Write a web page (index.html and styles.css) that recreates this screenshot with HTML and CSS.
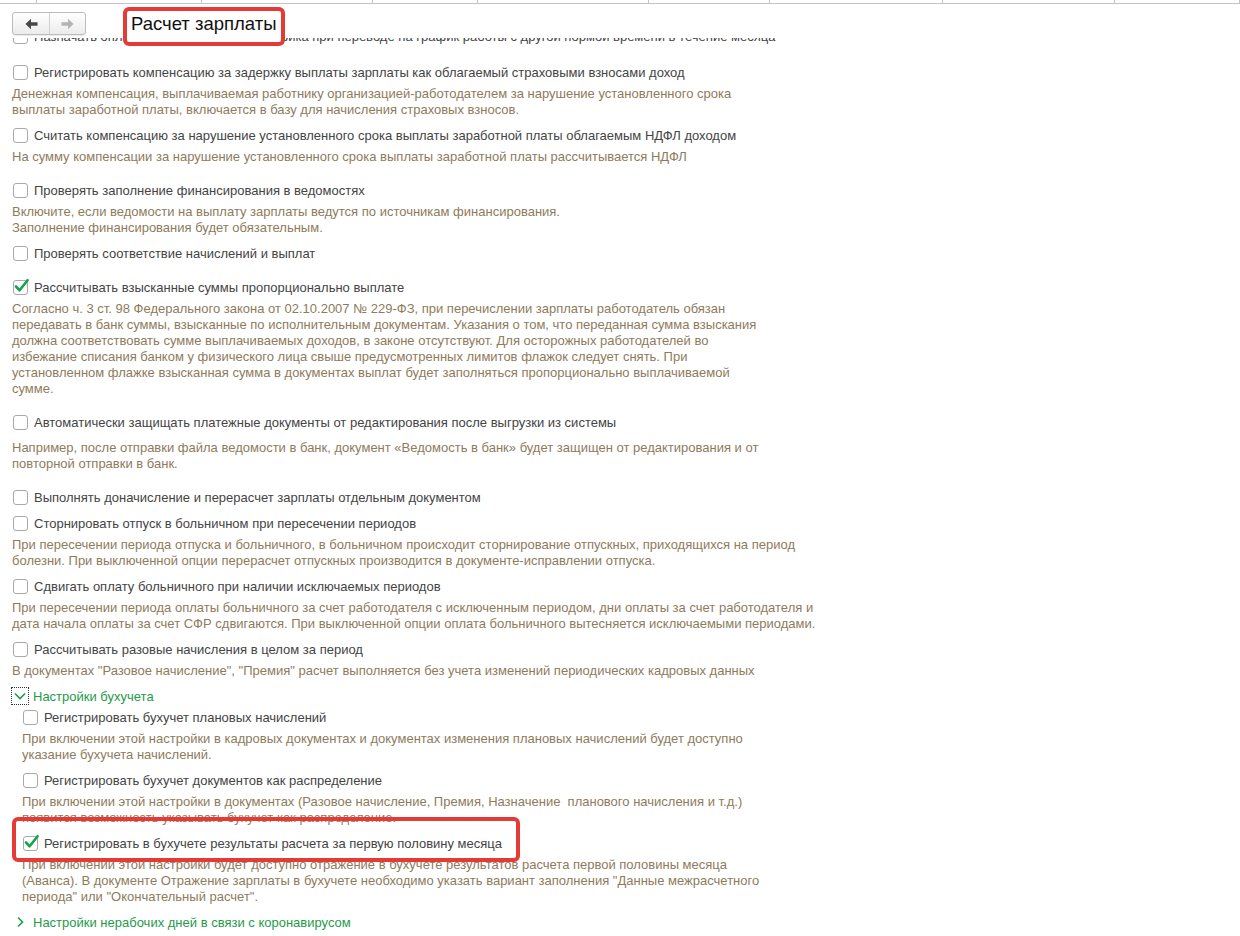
FILE: index.html
```html
<!DOCTYPE html>
<html lang="ru">
    <head>
        <meta charset="utf-8" />
        <title>Расчет зарплаты</title>
        <link rel="stylesheet" href="styles.css">
    </head>

    <body>
        <div class="topgrid">
            <span></span><span></span><span></span><span></span><span></span><span></span><span></span><span></span><span></span>
        </div>

        <div class="toolbar">
            <div class="nav">
                <button class="nav-btn">
                    <svg width="13" height="12" viewBox="0 0 13 12"><path d="M0.5 6 L6 0.8 L6 4.2 L12.5 4.2 L12.5 7.8 L6 7.8 L6 11.2 Z" fill="#474747"/></svg>
                </button>
                <button class="nav-btn off">
                    <svg width="13" height="12" viewBox="0 0 13 12"><path d="M12.5 6 L7 0.8 L7 4.2 L0.5 4.2 L0.5 7.8 L7 7.8 L7 11.2 Z" fill="#b4b4b4"/></svg>
                </button>
            </div>
            <div class="title">Расчет зарплаты</div>
        </div>

        <div class="content">
            <div class="list">
                <div class="item gap-12">
                    <div class="row"><span class="cb"></span><span class="label">Назначать оплату по данным нового графика при переводе на график работы с другой нормой времени в течение месяца</span></div>
                </div>

                <div class="item">
                    <div class="row"><span class="cb"></span><span class="label">Регистрировать компенсацию за задержку выплаты зарплаты как облагаемый страховыми взносами доход</span></div>
                    <div class="desc">Денежная компенсация, выплачиваемая работнику организацией-работодателем за нарушение установленного срока<br>выплаты заработной платы, включается в базу для начисления страховых взносов.</div>
                </div>

                <div class="item gap-13">
                    <div class="row"><span class="cb"></span><span class="label">Считать компенсацию за нарушение установленного срока выплаты заработной платы облагаемым НДФЛ доходом</span></div>
                    <div class="desc">На сумму компенсации за нарушение установленного срока выплаты заработной платы рассчитывается НДФЛ</div>
                </div>

                <div class="item">
                    <div class="row"><span class="cb"></span><span class="label">Проверять заполнение финансирования в ведомостях</span></div>
                    <div class="desc">Включите, если ведомости на выплату зарплаты ведутся по источникам финансирования.<br>Заполнение финансирования будет обязательным.</div>
                </div>

                <div class="item gap-10">
                    <div class="row"><span class="cb"></span><span class="label">Проверять соответствие начислений и выплат</span></div>
                </div>

                <div class="item gap-13">
                    <div class="row"><span class="cb on"><svg width="17" height="16" viewBox="0 0 17 16"><path d="M3 8.5 L6.6 12.3 L14.6 2.2" fill="none" stroke="#17a34a" stroke-width="2.6" stroke-linecap="round" stroke-linejoin="round"/></svg></span><span class="label">Рассчитывать взысканные суммы пропорционально выплате</span></div>
                    <div class="desc">Согласно ч. 3 ст. 98 Федерального закона от 02.10.2007 № 229-ФЗ, при перечислении зарплаты работодатель обязан<br>передавать в банк суммы, взысканные по исполнительным документам. Указания о том, что переданная сумма взыскания<br>должна соответствовать сумме выплачиваемых доходов, в законе отсутствуют. Для осторожных работодателей во<br>избежание списания банком у физического лица свыше предусмотренных лимитов флажок следует снять. При<br>установленном флажке взысканная сумма в документах выплат будет заполняться пропорционально выплачиваемой<br>сумме.</div>
                </div>

                <div class="item gap-13">
                    <div class="row"><span class="cb"></span><span class="label">Автоматически защищать платежные документы от редактирования после выгрузки из системы</span></div>
                    <div class="desc far">Например, после отправки файла ведомости в банк, документ «Ведомость в банк» будет защищен от редактирования и от<br>повторной отправки в банк.</div>
                </div>

                <div class="item gap-2">
                    <div class="row"><span class="cb"></span><span class="label">Выполнять доначисление и перерасчет зарплаты отдельным документом</span></div>
                </div>

                <div class="item">
                    <div class="row"><span class="cb"></span><span class="label">Сторнировать отпуск в больничном при пересечении периодов</span></div>
                    <div class="desc">При пересечении периода отпуска и больничного, в больничном происходит сторнирование отпускных, приходящихся на период<br>болезни. При выключенной опции перерасчет отпускных производится в документе-исправлении отпуска.</div>
                </div>

                <div class="item">
                    <div class="row"><span class="cb"></span><span class="label">Сдвигать оплату больничного при наличии исключаемых периодов</span></div>
                    <div class="desc">При пересечении периода оплаты больничного за счет работодателя с исключенным периодом, дни оплаты за счет работодателя и<br>дата начала оплаты за счет СФР сдвигаются. При выключенной опции оплата больничного вытесняется исключаемыми периодами.</div>
                </div>

                <div class="item gap-7">
                    <div class="row"><span class="cb"></span><span class="label">Рассчитывать разовые начисления в целом за период</span></div>
                    <div class="desc">В документах "Разовое начисление", "Премия" расчет выполняется без учета изменений периодических кадровых данных</div>
                </div>

                <div class="group-head">
                    <span class="chev focused">
                        <svg width="14" height="14" viewBox="0 0 14 14"><path d="M2 4.5 L7 9.5 L12 4.5" fill="none" stroke="#1f9a4a" stroke-width="1.6"/></svg>
                    </span>
                    <span>Настройки бухучета</span>
                </div>
                <div class="group-body">
                    <div class="item">
                        <div class="row"><span class="cb"></span><span class="label">Регистрировать бухучет плановых начислений</span></div>
                        <div class="desc">При включении этой настройки в кадровых документах и документах изменения плановых начислений будет доступно<br>указание бухучета начислений.</div>
                    </div>

                    <div class="item">
                        <div class="row"><span class="cb"></span><span class="label">Регистрировать бухучет документов как распределение</span></div>
                        <div class="desc">При включении этой настройки в документах (Разовое начисление, Премия, Назначение&nbsp; планового начисления и т.д.)<br>появится возможность указывать бухучет как распределение.</div>
                    </div>

                    <div class="item gap-7 marked">
                        <div class="row"><span class="cb on"><svg width="17" height="16" viewBox="0 0 17 16"><path d="M3 8.5 L6.6 12.3 L14.6 2.2" fill="none" stroke="#17a34a" stroke-width="2.6" stroke-linecap="round" stroke-linejoin="round"/></svg></span><span class="label">Регистрировать в бухучете результаты расчета за первую половину месяца</span></div>
                        <div class="desc">При включении этой настройки будет доступно отражение в бухучете результатов расчета первой половины месяца<br>(Аванса). В документе Отражение зарплаты в бухучете необходимо указать вариант заполнения "Данные межрасчетного<br>периода" или "Окончательный расчет".</div>
                        <div class="mark"></div>
                    </div>
                </div>

                <div class="group-head">
                    <span class="chev">
                        <svg width="14" height="14" viewBox="0 0 14 14"><path d="M5 2.5 L9.5 7 L5 11.5" fill="none" stroke="#1f9a4a" stroke-width="1.6"/></svg>
                    </span>
                    <span>Настройки нерабочих дней в связи с коронавирусом</span>
                </div>
            </div>
        </div>
    </body>
</html>
```

FILE: styles.css
```css
html, body {
    margin: 0;
    padding: 0;
    height: 936px;
    overflow: hidden;
    background: #fff;
}
body {
    font-family: "Liberation Sans", Arial, sans-serif;
    font-size: 13px;
    color: #444;
}
.topgrid {
    display: grid;
    grid-template-columns: 37px 165px 171px 105px 171px 121px 173px 172px 1fr;
    height: 3px;
    border-bottom: 1px solid #c4c4c4;
}
.topgrid span {
    border-right: 1px solid #c4c4c4;
}
.toolbar {
    display: flex;
    align-items: flex-start;
    height: 26px;
    padding: 8px 0 0 12px;
}
.nav {
    display: flex;
    height: 23px;
    border: 1px solid #bcbcbc;
    border-radius: 3px;
    box-sizing: border-box;
    background: linear-gradient(#ffffff, #ececec);
    box-shadow: 0 1px 1px rgba(0, 0, 0, 0.08);
}
.nav-btn {
    width: 36px;
    padding: 0;
    margin: 0;
    border: 0;
    background: none;
    display: flex;
    align-items: center;
    justify-content: center;
}
.nav-btn + .nav-btn {
    border-left: 1px solid #cfcfcf;
}
.title {
    position: relative;
    z-index: 2;
    margin: -5px 0 0 37px;
    width: 162px;
    height: 39px;
    box-sizing: border-box;
    padding: 0 4px;
    border: 4px solid #e53a35;
    border-radius: 6px;
    background: #fff;
    font-size: 18.5px;
    line-height: 26px;
    color: #111;
    white-space: nowrap;
}
.content {
    height: 898px;
    overflow: hidden;
}
.list {
    margin-top: -14px;
    padding-left: 12px;
}
.item {
    margin-bottom: 5px;
}
.item.gap-2 { margin-bottom: 2px; }
.item.gap-7 { margin-bottom: 7px; }
.item.gap-10 { margin-bottom: 10px; }
.item.gap-12 { margin-bottom: 12px; }
.item.gap-13 { margin-bottom: 13px; }
.row {
    display: flex;
    align-items: center;
    height: 24px;
}
.cb {
    position: relative;
    width: 15px;
    height: 15px;
    margin-left: 1px;
    box-sizing: border-box;
    border: 1px solid #a9a9a9;
    border-radius: 3px;
    background: #fff;
    flex: none;
}
.cb svg {
    position: absolute;
    left: -1px;
    top: -3px;
}
.label {
    margin-left: 6px;
    color: #444;
    white-space: nowrap;
}
.desc {
    margin-top: 2px;
    line-height: 16px;
    color: #8e7b5c;
    white-space: nowrap;
}
.desc.far {
    margin-top: 6px;
}
.group-head {
    display: flex;
    align-items: center;
    height: 20px;
    color: #1f9a4a;
}
.chev {
    width: 18px;
    height: 18px;
    box-sizing: border-box;
    margin-left: -1px;
    margin-right: 4px;
    display: flex;
    align-items: center;
    justify-content: center;
}
.chev.focused {
    border: 1px dotted #333;
}
.group-body {
    margin-top: -1px;
    padding-left: 10px;
}
.marked {
    position: relative;
}
.mark {
    position: absolute;
    left: -10px;
    top: -14px;
    width: 508px;
    height: 45px;
    box-sizing: border-box;
    border: 4px solid #e53a35;
    border-radius: 6px;
    pointer-events: none;
}
```
